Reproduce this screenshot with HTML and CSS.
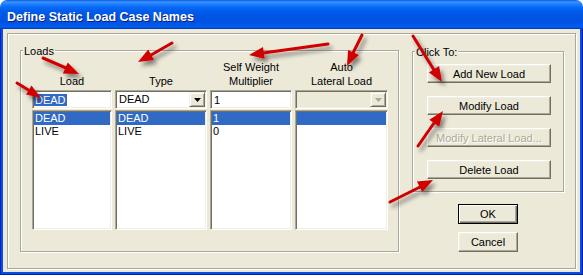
FILE: index.html
```html
<!DOCTYPE html>
<html lang="en">
<head>
<meta charset="UTF-8">
<meta name="viewport" content="width=device-width, initial-scale=1.0">
<title>Define Static Load Case Names</title>
<link rel="stylesheet" href="styles.css">
</head>
<body>
<div class="window">
    <div class="titlebar">Define Static Load Case Names</div>
    <div class="sides">
        <div class="client">
            <div class="frame">
                <div class="group loads">
                    <span class="group-label">Loads</span>
                    <div class="columns">
                        <div class="col col-load">
                            <div class="head">Load</div>
                            <div class="field text"><span class="sel-text">DEAD</span></div>
                            <ul class="list">
                                <li class="selected">DEAD</li>
                                <li>LIVE</li>
                            </ul>
                        </div>
                        <div class="col col-type">
                            <div class="head">Type</div>
                            <div class="field combo">
                                <span class="value">DEAD</span>
                                <span class="drop"><svg width="7" height="4" viewBox="0 0 7 4"><polygon points="0,0 7,0 3.5,4" fill="#000"/></svg></span>
                            </div>
                            <ul class="list">
                                <li class="selected">DEAD</li>
                                <li>LIVE</li>
                            </ul>
                        </div>
                        <div class="col col-mult">
                            <div class="head">Self Weight<br>Multiplier</div>
                            <div class="field text pad">1</div>
                            <ul class="list">
                                <li class="selected">1</li>
                                <li>0</li>
                            </ul>
                        </div>
                        <div class="col col-auto">
                            <div class="head">Auto<br>Lateral Load</div>
                            <div class="field combo disabled">
                                <span class="value"></span>
                                <span class="drop"><svg width="7" height="4" viewBox="0 0 7 4"><polygon points="0,0 7,0 3.5,4" fill="#ACA899"/></svg></span>
                            </div>
                            <ul class="list">
                                <li class="selected"></li>
                            </ul>
                        </div>
                    </div>
                </div>
                <div class="side">
                    <div class="group click">
                        <span class="group-label">Click To:</span>
                        <button class="btn wide">Add New Load</button>
                        <button class="btn wide">Modify Load</button>
                        <button class="btn wide" disabled>Modify Lateral Load...</button>
                        <button class="btn wide">Delete Load</button>
                    </div>
                    <button class="btn small default">OK</button>
                    <button class="btn small cancel">Cancel</button>
                </div>
            </div>
        </div>
    </div>
</div>
<div class="below"></div>

<!-- red annotation arrows drawn over the dialog -->
<svg class="arrows" width="583" height="278" viewBox="0 0 583 278">
    <defs>
        <filter id="shadow" filterUnits="userSpaceOnUse" x="0" y="0" width="583" height="278">
            <feDropShadow dx="3" dy="4" stdDeviation="2" flood-color="#000" flood-opacity="0.45"/>
        </filter>
    </defs>
    <g filter="url(#shadow)" fill="#D00000" stroke="#D00000" stroke-width="3" stroke-linecap="round">
        <line x1="43" y1="58" x2="66" y2="68"/>
        <polygon stroke="none" points="79,74 62.9,73.4 67.7,62.4"/>

        <line x1="172" y1="43" x2="151" y2="55"/>
        <polygon stroke="none" points="138,62 148.2,49.5 154,59.9"/>

        <line x1="17" y1="83" x2="30" y2="91"/>
        <polygon stroke="none" points="41,98 26.1,94.6 31.5,85.4"/>

        <line x1="328" y1="44" x2="263" y2="53"/>
        <polygon stroke="none" points="249,55 263,47 264.6,58.8"/>

        <line x1="362" y1="35" x2="353" y2="53"/>
        <polygon stroke="none" points="347,66 348.1,49.9 358.9,55.1"/>

        <line x1="413" y1="36" x2="434" y2="70"/>
        <polygon stroke="none" points="442,82 428.9,72.5 439.1,66.1"/>

        <line x1="418" y1="146" x2="434" y2="123"/>
        <polygon stroke="none" points="443,111 439.2,126.7 429.4,119.7"/>

        <line x1="390" y1="202" x2="420" y2="187"/>
        <polygon stroke="none" points="433,180 422.3,192.1 416.9,181.5"/>
    </g>
</svg>
</body>
</html>
```

FILE: styles.css
```css
body {
    margin: 0;
    width: 583px;
    height: 278px;
    overflow: hidden;
    position: relative;
    background: #fff;
    font-family: 'Liberation Sans', Arial, sans-serif;
    font-size: 11px;
    color: #000;
}
.window {
    width: 583px;
    border-radius: 7px 7px 0 0;
    overflow: hidden;
}
.titlebar {
    height: 29px;
    box-sizing: border-box;
    padding: 9px 0 0 7px;
    line-height: 16px;
    font-size: 12.5px;
    font-weight: bold;
    color: #fff;
    text-shadow: 1px 1px 0 #0A1E80;
    background: linear-gradient(to bottom, #0A5BE0 0, #3C92FF 2px, #1C80FF 4px, #0A6BF6 7px, #005DEB 11px, #0055E5 16px, #0053E1 22px, #0057E8 25px, #0061F2 27px, #0047CC 28px, #003BB8 29px);
}
.sides {
    padding: 0 3px 3px;
    background: #0A4DE2;
    box-shadow: inset 1px 0 0 #0020C8, inset -1px 0 0 #0020A8, inset 0 -1px 0 #0020A8;
}
.client {
    height: 243px;
    box-sizing: border-box;
    padding: 4px 4px 3px;
    background: #ECE9D8;
}
.frame {
    height: 236px;
    box-sizing: border-box;
    display: flex;
    align-items: flex-start;
    padding: 16px 0 0 12px;
    border: 1px solid #ACA899;
    box-shadow: inset 1px 1px 0 #fff, 1px 1px 0 #fff;
}
.group {
    position: relative;
    box-sizing: border-box;
    border: 1px solid #ACA899;
    box-shadow: inset 1px 1px 0 #fff, 1px 1px 0 #fff;
}
.group-label {
    position: absolute;
    top: -6px;
    left: 2px;
    padding: 0 1px;
    line-height: 13px;
    background: #ECE9D8;
}
.loads {
    width: 379px;
    height: 202px;
    padding: 9px 0 0 11px;
}
.columns {
    display: flex;
    gap: 3px;
}
.col-load { width: 80px; }
.col-type { width: 92px; }
.col-mult { width: 82px; }
.col-auto { width: 93px; }
.head {
    height: 28px;
    margin-bottom: 2px;
    display: flex;
    align-items: flex-end;
    justify-content: center;
    text-align: center;
    line-height: 14px;
}
.field {
    height: 19px;
    box-sizing: border-box;
    margin-bottom: 1px;
    border: 1px solid;
    border-color: #ACA899 #fff #fff #ACA899;
    box-shadow: inset 1px 1px 0 #716F64, inset -1px -1px 0 #F1EFE2;
    background: #fff;
    line-height: 13px;
}
.text {
    padding: 3px 1px 0;
}
.text.pad {
    padding-left: 3px;
}
.sel-text {
    padding: 0 1px;
    background: #316AC5;
    color: #fff;
}
.combo {
    display: flex;
    align-items: center;
    padding: 1px 1px 1px 3px;
}
.combo .value {
    flex: 1;
}
.combo.disabled {
    background: #ECE9D8;
}
.drop {
    width: 16px;
    height: 15px;
    box-sizing: border-box;
    display: flex;
    align-items: center;
    justify-content: center;
    border: 1px solid;
    border-color: #F1EFE2 #716F64 #716F64 #F1EFE2;
    box-shadow: inset 1px 1px 0 #fff, inset -1px -1px 0 #ACA899;
    background: #ECE9D8;
}
.list {
    list-style: none;
    margin: 0;
    height: 120px;
    box-sizing: border-box;
    padding: 1px;
    border: 1px solid;
    border-color: #ACA899 #fff #fff #ACA899;
    box-shadow: inset 1px 1px 0 #716F64, inset -1px -1px 0 #F1EFE2;
    background: #fff;
}
.list li {
    height: 13px;
    line-height: 13px;
    padding-left: 1px;
}
.list li.selected {
    background: #316AC5;
    color: #fff;
}
.side {
    width: 152px;
    margin: 1px 0 0 13px;
    display: flex;
    flex-direction: column;
    align-items: center;
}
.click {
    width: 152px;
    height: 141px;
    padding: 12px 0 0 14px;
    display: flex;
    flex-direction: column;
    align-items: flex-start;
    gap: 13px;
}
.btn {
    box-sizing: border-box;
    padding: 0;
    font: inherit;
    color: #000;
    background: #ECE9D8;
    border: 1px solid;
    border-color: #fff #716F64 #716F64 #fff;
    box-shadow: inset -1px -1px 0 #ACA899, inset 1px 1px 0 #F1EFE2;
}
.btn.wide {
    width: 124px;
    height: 19px;
}
.btn:disabled {
    color: #ACA899;
    text-shadow: 1px 1px 0 #fff;
}
.btn.small {
    width: 60px;
    height: 20px;
}
.btn.default {
    margin-top: 12px;
    border-color: #000;
    box-shadow: inset 1px 1px 0 #fff, inset -1px -1px 0 #716F64, inset -2px -2px 0 #ACA899;
}
.btn.cancel {
    margin-top: 8px;
}
.below {
    height: 3px;
    background: #fff;
}
.arrows {
    position: absolute;
    top: 0;
    left: 0;
    pointer-events: none;
}
```
